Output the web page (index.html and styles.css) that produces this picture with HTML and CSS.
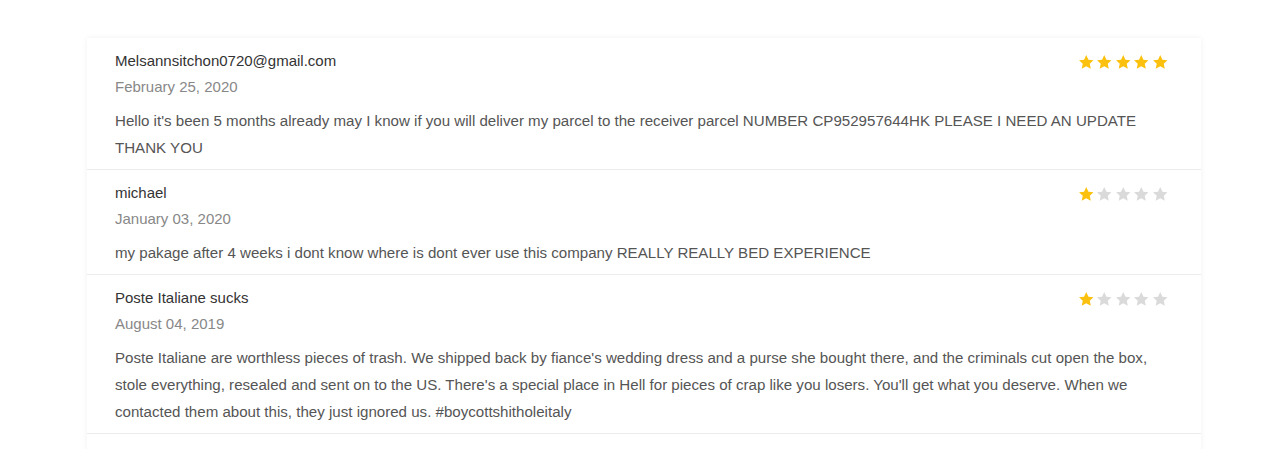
FILE: index.html
```html
<!DOCTYPE html>
<html lang="en">
<head>
    <meta charset="UTF-8">
    <meta name="viewport" content="width=device-width, initial-scale=1.0">
    <title>Reviews</title>
    <link rel="stylesheet" href="styles.css">
</head>
<body>

    <svg width="0" height="0" class="defs">
        <symbol id="star" viewBox="0 0 24 24">
            <path d="M12 1.5l3.2 6.9 7.3.8-5.4 5 1.5 7.4L12 17.9l-6.6 3.7 1.5-7.4-5.4-5 7.3-.8z"/>
        </symbol>
    </svg>

    <div class="reviews">
        <div class="review">
            <div class="review-head">
                <div>
                    <div class="author">Melsannsitchon0720@gmail.com</div>
                    <div class="date">February 25, 2020</div>
                </div>
                <div class="stars">
                    <svg class="star on"><use href="#star"/></svg>
                    <svg class="star on"><use href="#star"/></svg>
                    <svg class="star on"><use href="#star"/></svg>
                    <svg class="star on"><use href="#star"/></svg>
                    <svg class="star on"><use href="#star"/></svg>
                </div>
            </div>
            <p class="text">Hello it's been 5 months already may I know if you will deliver my parcel to the receiver parcel NUMBER CP952957644HK PLEASE I NEED AN UPDATE THANK YOU</p>
        </div>

        <div class="review">
            <div class="review-head">
                <div>
                    <div class="author">michael</div>
                    <div class="date">January 03, 2020</div>
                </div>
                <div class="stars">
                    <svg class="star on"><use href="#star"/></svg>
                    <svg class="star"><use href="#star"/></svg>
                    <svg class="star"><use href="#star"/></svg>
                    <svg class="star"><use href="#star"/></svg>
                    <svg class="star"><use href="#star"/></svg>
                </div>
            </div>
            <p class="text">my pakage after 4 weeks i dont know where is dont ever use this company REALLY REALLY BED EXPERIENCE</p>
        </div>

        <div class="review">
            <div class="review-head">
                <div>
                    <div class="author">Poste Italiane sucks</div>
                    <div class="date">August 04, 2019</div>
                </div>
                <div class="stars">
                    <svg class="star on"><use href="#star"/></svg>
                    <svg class="star"><use href="#star"/></svg>
                    <svg class="star"><use href="#star"/></svg>
                    <svg class="star"><use href="#star"/></svg>
                    <svg class="star"><use href="#star"/></svg>
                </div>
            </div>
            <p class="text">Poste Italiane are worthless pieces of trash. We shipped back by fiance's wedding dress and a purse she bought there, and the criminals cut open the box, stole everything, resealed and sent on to the US. There's a special place in Hell for pieces of crap like you losers. You'll get what you deserve. When we contacted them about this, they just ignored us. #boycottshitholeitaly</p>
        </div>

        <div class="review empty"></div>
    </div>

</body>
</html>
```

FILE: styles.css
```css
body {
    font-family: "Liberation Sans", Arial, sans-serif;
    margin: 0;
    padding: 38px 0 0 87px;
    background-color: #fff;
}
.defs {
    position: absolute;
}
.reviews {
    width: 1114px;
    background-color: #fff;
    box-shadow: 0 0 6px rgba(0, 0, 0, 0.06);
}
.review {
    padding: 13px 33px 8.5px 28px;
    border-bottom: 1px solid #ececec;
}
.review.empty {
    height: 40px;
    border-bottom: none;
}
.review-head {
    display: flex;
    justify-content: space-between;
    align-items: flex-start;
}
.author {
    font-size: 15px;
    line-height: 20px;
    color: #333;
}
.date {
    margin-top: 5.5px;
    font-size: 15px;
    line-height: 20px;
    color: #888;
}
.stars {
    display: flex;
    gap: 2px;
    margin-top: 3px;
}
.star {
    width: 16.5px;
    height: 16.5px;
    fill: #dadada;
}
.star.on {
    fill: #fcc10e;
}
.text {
    margin: 10px 0 0;
    font-size: 15.1px;
    line-height: 27px;
    color: #555;
}
```
